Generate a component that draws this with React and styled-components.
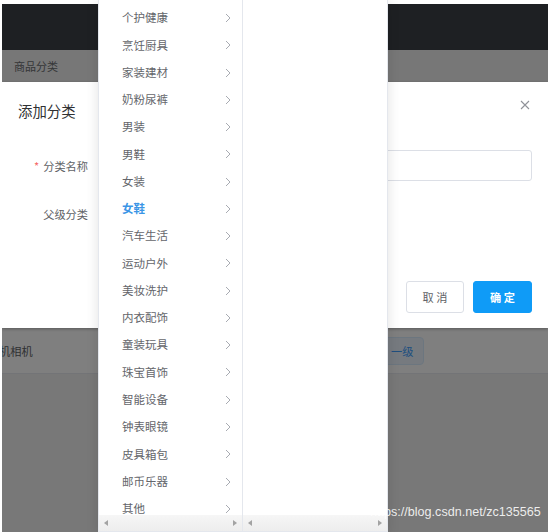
import React from 'react';
import styled, { createGlobalStyle } from 'styled-components';

const GlobalStyle = createGlobalStyle`
  html, body { margin: 0; padding: 0; background: #fff; }
  body { font-family: "Noto Sans CJK SC", "Noto Sans", sans-serif; }
  * { box-sizing: border-box; }
`;

const Page = styled.div`
  position: relative;
  width: 553px;
  height: 532px;
  padding: 4px 5px 0 2px;
  overflow: hidden;
  background: #fff;
`;

const Screen = styled.div`
  position: relative;
  height: 528px;
  overflow: hidden;
  display: flex;
  flex-direction: column;
  background: #f0f0f0;
`;

const TopBar = styled.div`
  height: 46px;
  background: #3c4046;
  flex-shrink: 0;
`;

const Breadcrumb = styled.div`
  height: 32px;
  background: #eeeeee;
  display: flex;
  align-items: center;
  padding-left: 12px;
  font-size: 11px;
  color: #6a6c70;
  flex-shrink: 0;
`;

const HiddenArea = styled.div`
  height: 246px;
  background: #fff;
  flex-shrink: 0;
`;

const TableRow = styled.div`
  height: 46px;
  background: #fff;
  border-bottom: 1px solid #e6e8ee;
  display: grid;
  grid-template-columns: 378px 1fr;
  align-items: center;
  flex-shrink: 0;
`;

const NameCell = styled.div`
  font-size: 11.2px;
  color: #606266;
  text-indent: -3px;
  white-space: nowrap;
`;

const Tag = styled.span`
  justify-self: start;
  display: inline-flex;
  align-items: center;
  height: 28px;
  padding: 0 10px;
  background: #ecf5ff;
  border: 1px solid #d9ecff;
  border-radius: 4px;
  color: #409eff;
  font-size: 11.2px;
`;

const Mask = styled.div`
  position: absolute;
  inset: 0;
  background: rgba(0, 0, 0, 0.5);
`;

const Dialog = styled.div`
  position: absolute;
  top: 78px;
  left: 0;
  right: 0;
  height: 246px;
  background: #fff;
  box-shadow: 0 1px 3px rgba(0, 0, 0, 0.3);
  display: flex;
  flex-direction: column;
`;

const DialogHeader = styled.div`
  position: relative;
  height: 48px;
  padding: 16px 16px 0 16px;
`;

const Title = styled.span`
  font-size: 14.4px;
  line-height: 19px;
  color: #303133;
`;

const CloseButton = styled.button`
  position: absolute;
  top: 18px;
  right: 18px;
  width: 10px;
  height: 10px;
  padding: 0;
  border: 0;
  background: none;
  display: flex;
`;

const DialogBody = styled.div`
  padding: 20px 16px 0 0;
  display: flex;
  flex-direction: column;
  gap: 17px;
`;

const FormRow = styled.div`
  display: flex;
  align-items: center;
  height: ${p => p.$h}px;
`;

const Label = styled.label`
  width: 96px;
  padding-right: 10px;
  text-align: right;
  font-size: 11.2px;
  color: #606266;
  flex-shrink: 0;
`;

const Star = styled.span`
  color: #f56c6c;
  margin-right: 4px;
`;

const TextInput = styled.div`
  flex: ${p => (p.$w ? '0 0 auto' : '1')};
  width: ${p => (p.$w ? `${p.$w}px` : 'auto')};
  height: 100%;
  border: 1px solid #dcdfe6;
  border-radius: 3px;
  background: #fff;
`;

const Footer = styled.div`
  margin-top: auto;
  padding: 0 16px 15px 0;
  display: flex;
  justify-content: flex-end;
  gap: 9px;
`;

const Button = styled.button`
  width: ${p => p.$w}px;
  height: 32px;
  border-radius: 3px;
  font-family: "Noto Sans CJK SC", sans-serif;
  font-size: 11.2px;
  border: 1px solid ${p => (p.$primary ? '#0f9bf7' : '#dcdfe6')};
  background: ${p => (p.$primary ? '#0f9bf7' : '#fff')};
  color: ${p => (p.$primary ? '#fff' : '#606266')};
  font-weight: ${p => (p.$primary ? 600 : 400)};
  padding: 0;
`;

const Dropdown = styled.div`
  position: absolute;
  top: 0;
  left: 98px;
  width: 290px;
  height: 532px;
  background: #fff;
  border: 1px solid #e4e7ed;
  border-top: 0;
  box-shadow: 0 2px 12px rgba(0, 0, 0, 0.12);
  display: flex;
`;

const Menu = styled.div`
  width: ${p => p.$w}px;
  height: 100%;
  display: flex;
  flex-direction: column;
  border-right: ${p => (p.$last ? '0' : '1px solid #e4e7ed')};
`;

const MenuList = styled.ul`
  flex: 1;
  margin: 0;
  padding: 4.4px 0 0;
  list-style: none;
  overflow: hidden;
`;

const MenuItem = styled.li`
  height: 27.28px;
  display: flex;
  align-items: center;
  justify-content: space-between;
  padding: 0 11px 0 23px;
  font-size: 11.5px;
  line-height: 1;
  color: ${p => (p.$active ? '#3b95e6' : '#64666b')};
  font-weight: ${p => (p.$active ? 700 : 400)};
`;

const ScrollBar = styled.div`
  height: 16px;
  flex-shrink: 0;
  background: linear-gradient(#f6f6f6, #ededed);
  display: flex;
  align-items: center;
  justify-content: space-between;
  padding: 0 5px;
`;

const Watermark = styled.div`
  position: absolute;
  left: 370px;
  top: 504px;
  font-family: "Liberation Sans", Arial, sans-serif;
  font-size: 12.6px;
  line-height: 16px;
  color: rgba(255, 255, 255, 0.88);
  white-space: nowrap;
`;

const Chevron = () => (
  <svg width="6" height="10" viewBox="0 0 6 10">
    <polyline points="1,1 5,5 1,9" fill="none" stroke="#a8abb2" strokeWidth="1" />
  </svg>
);

const Arrow = ({ dir }) => (
  <svg width="4" height="6" viewBox="0 0 4 6">
    <polygon points={dir === 'left' ? '4,0 0,3 4,6' : '0,0 4,3 0,6'} fill="#a3a3a3" />
  </svg>
);

const items = [
  '个护健康', '烹饪厨具', '家装建材', '奶粉尿裤', '男装', '男鞋', '女装', '女鞋',
  '汽车生活', '运动户外', '美妆洗护', '内衣配饰', '童装玩具', '珠宝首饰', '智能设备',
  '钟表眼镜', '皮具箱包', '邮币乐器', '其他',
];

export default function App() {
  return (
    <>
      <GlobalStyle />
      <Page>
        <Screen>
          <TopBar />
          <Breadcrumb>商品分类</Breadcrumb>
          <HiddenArea />
          <TableRow>
            <NameCell>机相机</NameCell>
            <Tag>一级</Tag>
          </TableRow>
          <Mask />
          <Dialog>
            <DialogHeader>
              <Title>添加分类</Title>
              <CloseButton aria-label="close">
                <svg width="10" height="10" viewBox="0 0 10 10">
                  <path d="M1 1 L9 9 M9 1 L1 9" stroke="#909399" strokeWidth="1.1" />
                </svg>
              </CloseButton>
            </DialogHeader>
            <DialogBody>
              <FormRow $h={31}>
                <Label><Star>*</Star>分类名称</Label>
                <TextInput />
              </FormRow>
              <FormRow $h={32}>
                <Label>父级分类</Label>
                <TextInput $w={180} />
              </FormRow>
            </DialogBody>
            <Footer>
              <Button $w={58}>取 消</Button>
              <Button $w={59} $primary>确 定</Button>
            </Footer>
          </Dialog>
        </Screen>
        <Dropdown>
          <Menu $w={144}>
            <MenuList>
              {items.map(name => (
                <MenuItem key={name} $active={name === '女鞋'}>
                  <span>{name}</span>
                  <Chevron />
                </MenuItem>
              ))}
            </MenuList>
            <ScrollBar>
              <Arrow dir="left" />
              <Arrow dir="right" />
            </ScrollBar>
          </Menu>
          <Menu $w={144} $last>
            <MenuList />
            <ScrollBar>
              <Arrow dir="left" />
              <Arrow dir="right" />
            </ScrollBar>
          </Menu>
        </Dropdown>
        <Watermark>https://blog.csdn.net/zc135565</Watermark>
      </Page>
    </>
  );
}
